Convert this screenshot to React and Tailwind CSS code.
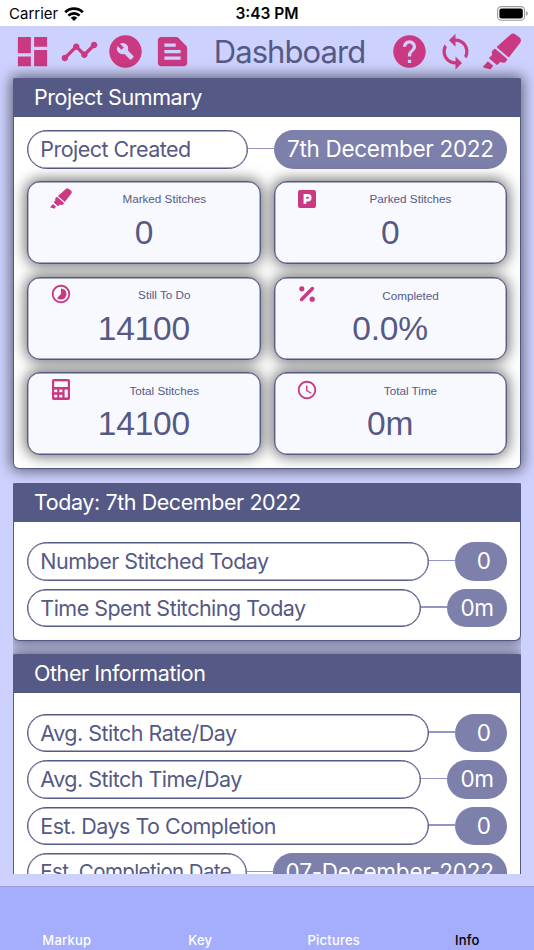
import {
  MdBuildCircle,
  MdDashboard,
  MdHelp,
  MdSchedule,
  MdSync,
  MdTextSnippet,
  MdTimelapse,
  MdTimeline,
} from "react-icons/md";

const MarkerIcon = ({ className }) => (
  <svg viewBox="0 0 38 37" className={className} fill="currentColor">
    <path d="M14.2 13.6 27.4 1.7Q29.8-.5 32.2 1.2L36.6 4.6Q39 6.8 37.2 9.8L26.4 23.8Q25.6 24.6 24.8 23.8L14.2 14.8Q13.5 14.2 14.2 13.6Z" />
    <path d="M12.9 16.2 24 25.8Q24.6 26.5 24 27.2L22 29.4Q21.3 30.1 20.3 29.8L17.3 29 14.8 31.5Q14 32.1 13.2 31.5L6.5 25.7Q5.8 25 6.5 24.2L9.1 21.9 8.8 18.9Q8.8 18 9.5 17.4L11.3 16Q12.1 15.5 12.9 16.2Z" />
    <path d="M4.9 28.2 10.2 32.8 8 35.8Q7.4 36.5 6.6 36.3L.5 34.5Q-.2 34.1.2 33.5Z" />
  </svg>
);

const ParkingIcon = ({ className }) => (
  <svg viewBox="0 0 18 18" className={className}>
    <rect width="18" height="18" rx="2" fill="currentColor" />
    <path
      d="M6.9 14V5.4h3a2.3 2.3 0 0 1 0 4.7h-3"
      fill="none"
      stroke="#fff"
      strokeWidth="2.6"
    />
  </svg>
);

const PercentIcon = ({ className }) => (
  <svg viewBox="0 0 16 16" className={className} fill="currentColor">
    <circle cx="2.8" cy="2.8" r="2.6" />
    <circle cx="13.2" cy="13.2" r="2.6" />
    <path
      d="M2.6 13.4 13.4 2.6"
      stroke="currentColor"
      strokeWidth="3.6"
      strokeLinecap="round"
    />
  </svg>
);

const CalculatorIcon = ({ className }) => (
  <svg viewBox="0 0 18 21" className={className}>
    <rect width="18" height="21" rx="1.8" fill="currentColor" />
    <g fill="#f8f9ff">
      <rect x="2.2" y="2.4" width="13.6" height="5.6" />
      <rect x="2.2" y="10.6" width="3" height="2.6" />
      <rect x="7.3" y="10.6" width="3" height="2.6" />
      <rect x="2.2" y="15.8" width="3" height="2.6" />
      <rect x="7.3" y="15.8" width="3" height="2.6" />
      <rect x="12.6" y="10.6" width="3.2" height="7.8" />
    </g>
  </svg>
);

const WifiIcon = () => (
  <svg viewBox="0 0 20 14" className="h-[14px] w-[20px]">
    <g fill="none" stroke="#000" strokeWidth="2.7">
      <path d="M1.2 5.2a12.6 12.6 0 0 1 17.6 0" />
      <path d="M4.4 8.6a8 8 0 0 1 11.2 0" />
    </g>
    <path d="M10 14 6.7 10.8a4.8 4.8 0 0 1 6.6 0z" />
  </svg>
);

const stats = [
  { label: "Marked Stitches", value: "0", Icon: MarkerIcon, iconClass: "h-[21px] w-[22px]" },
  { label: "Parked Stitches", value: "0", Icon: ParkingIcon, iconClass: "size-[18px]" },
  { label: "Still To Do", value: "14100", Icon: MdTimelapse, iconClass: "size-[22px]" },
  { label: "Completed", value: "0.0%", Icon: PercentIcon, iconClass: "size-[16px]", low: true },
  { label: "Total Stitches", value: "14100", Icon: CalculatorIcon, iconClass: "h-[21px] w-[18px]" },
  { label: "Total Time", value: "0m", Icon: MdSchedule, iconClass: "size-[22px]" },
];

const otherInfo = [
  { label: "Avg. Stitch Rate/Day", value: "0" },
  { label: "Avg. Stitch Time/Day", value: "0m" },
  { label: "Est. Days To Completion", value: "0" },
  { label: "Est. Completion Date", value: "07-December-2022", tight: true },
];

const tabs = ["Markup", "Key", "Pictures", "Info"];

function StatCard({ label, value, Icon, iconClass, low }) {
  return (
    <div className="h-[83px] rounded-[13px] border border-[#555985] bg-[#f8f9ff] font-['Liberation_Sans',sans-serif] text-[#555985] shadow-[inset_0_0_0_0.4px_#555985,0_0_14px_2px_rgba(0,0,0,0.55)]">
      <div className="flex h-[33px] items-center">
        <div className="flex w-[64.5px] justify-center">
          <Icon className={`${iconClass} text-[#c93a83]`} />
        </div>
        <div className={`ml-px w-[141px] text-center text-[11.7px] ${low ? "pt-[3px]" : "pt-px"}`}>
          {label}
        </div>
      </div>
      <div className="text-center text-[33.5px] leading-[36px] tracking-[-0.2px]">{value}</div>
    </div>
  );
}

function InfoRow({ label, value, tight }) {
  return (
    <div className="flex h-[38.5px] items-center text-[21.5px] whitespace-nowrap">
      <div
        className={`flex h-full min-w-0 flex-1 items-center rounded-full border border-[#555985] pl-3 text-[#555985] shadow-[inset_0_0_0_0.4px_#555985] ${tight ? "text-[20.5px] tracking-[-0.6px]" : "tracking-[-0.52px]"}`}
      >
        {label}
      </div>
      <div className="-mt-[2px] h-[1.5px] w-[26px] shrink-0 bg-[#9295c6]" />
      <div
        className={`flex h-full min-w-[52px] items-center justify-end rounded-full bg-[#7c80ab] pl-[13px] text-[22.5px] text-white ${tight ? "tracking-[-0.2px]" : "tracking-[-0.3px]"} ${value === "0" ? "pr-4" : "pr-[13px]"}`}
      >
        {value}
      </div>
    </div>
  );
}

function Panel({ title, className, children }) {
  return (
    <section
      className={`rounded-t-[2px] rounded-b-[6px] border border-t-0 border-[#555985] bg-white shadow-[0_0_14px_2px_rgba(0,0,0,0.55)] ${className}`}
    >
      <h2 className="-mx-px flex h-[39px] items-center rounded-t-[2px] bg-[#555985] pl-[20.7px] text-[21.5px] tracking-[-0.42px] text-white">
        {title}
      </h2>
      {children}
    </section>
  );
}

export default function App() {
  return (
    <div className="flex h-[950px] w-[534px] flex-col overflow-hidden bg-[#cdd1fd] font-[Inter,sans-serif]">
      <div className="grid h-[26px] shrink-0 grid-cols-3 items-center bg-white pt-[1.5px] pr-[5px] pl-[9px] text-[15.5px] text-black">
        <div className="flex items-center gap-[6px]">
          <span className="text-[15px]">Carrier</span>
          <WifiIcon />
        </div>
        <div className="pr-[4px] text-center font-semibold whitespace-nowrap">3:43 PM</div>
        <div className="flex justify-end">
          <svg viewBox="0 0 32 15" className="h-[15px] w-[32px]">
            <rect x=".6" y=".6" width="27" height="13.6" rx="3.8" fill="none" stroke="#999" strokeWidth="1.1" />
            <rect x="2.4" y="2.4" width="23.4" height="10" rx="2.2" />
            <path d="M29.2 5v4.8q1.6-.8 1.6-2.4T29.2 5z" fill="#999" />
          </svg>
        </div>
      </div>

      <header className="flex h-[52px] shrink-0 items-center px-[13px] pb-px text-[#c93a83]">
        <div className="flex gap-[7.5px]">
          <MdDashboard className="size-[39px]" />
          <MdTimeline className="size-[39px]" />
          <MdBuildCircle className="size-[39px]" />
          <MdTextSnippet className="size-[39px]" />
        </div>
        <h1 className="flex-1 pt-px pr-[2px] text-center text-[31px] tracking-[-0.95px] text-[#555985]">
          Dashboard
        </h1>
        <div className="flex items-center">
          <MdHelp className="size-[39px]" />
          <MdSync className="ml-[7px] size-[39px]" />
          <MarkerIcon className="ml-[8.5px] h-[37px] w-[38px]" />
        </div>
      </header>

      <main className="h-[796px] shrink-0 px-[13.3px]">
        <Panel title="Project Summary" className="h-[391px]">
          <div className="px-[13px] pt-[13px]">
            <InfoRow label="Project Created" value="7th December 2022" />
            <div className="mt-[12.5px] grid grid-cols-2 gap-x-[13px] gap-y-[12.7px]">
              {stats.map((stat) => (
                <StatCard key={stat.label} {...stat} />
              ))}
            </div>
          </div>
        </Panel>

        <div className="mt-[13.5px] h-[391.5px] overflow-hidden">
          <Panel title="Today: 7th December 2022" className="h-[158px]">
            <div className="space-y-2 px-[13px] pt-[20.5px]">
              <InfoRow label="Number Stitched Today" value="0" />
              <InfoRow label="Time Spent Stitching Today" value="0m" />
            </div>
          </Panel>
          <Panel title="Other Information" className="mt-[13.5px] h-[260px]">
            <div className="space-y-2 px-[13px] pt-[20.5px]">
              {otherInfo.map((row) => (
                <InfoRow key={row.label} {...row} />
              ))}
            </div>
          </Panel>
        </div>
      </main>

      <nav className="mt-[12px] grid flex-1 grid-cols-4 items-end border-t border-[#989fdc] bg-[#a5adfd] text-center text-[13px] font-medium tracking-[0.2px]">
        {tabs.map((tab) => (
          <span key={tab} className={tab === "Info" ? "text-black" : "text-white"}>
            {tab}
          </span>
        ))}
      </nav>
    </div>
  );
}
